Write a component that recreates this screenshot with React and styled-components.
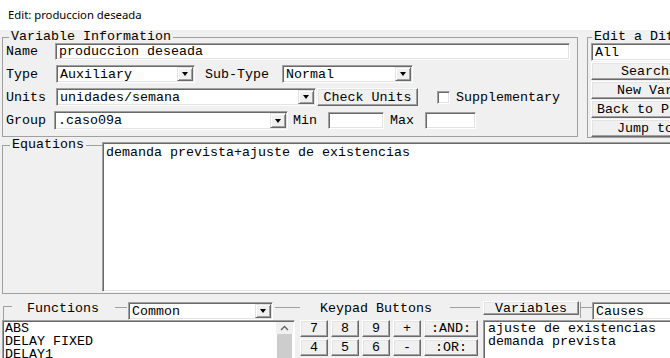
import React from "react";
import styled, { createGlobalStyle } from "styled-components";

const MONO = `"Liberation Mono", "DejaVu Sans Mono", monospace`;

const Global = createGlobalStyle`
  html, body { margin: 0; padding: 0; overflow: hidden; background: #f0f0f0; }
  body { width: 670px; height: 358px; }
`;

const Window = styled.div`
  width: 780px;
  height: 358px;
  overflow: hidden;
  background: #f0f0f0;
  font-family: ${MONO};
  font-size: 13.33px;
  line-height: 15px;
  color: #000;
`;

const TitleBar = styled.div`
  height: 30px;
  background: #fff;
  padding-left: 8px;
  font-family: "Noto Sans", "Segoe UI", sans-serif;
  font-size: 11.3px;
  line-height: 30px;
`;

const TopRow = styled.div`
  display: flex;
  align-items: flex-start;
  height: 108px;
  padding: 1px 0 0 2px;
  gap: 9px;
`;

const Group = styled.fieldset`
  margin: 0;
  padding: 0 0 ${(p) => p.$pb ?? 0}px ${(p) => p.$pl ?? 3}px;
  border: 1px solid #a0a0a0;
  min-width: 0;
  width: ${(p) => p.$w}px;
  box-sizing: border-box;
  flex: none;
`;

const Legend = styled.legend`
  margin-left: ${(p) => p.$ml ?? 3}px;
  padding: 0 2px;
  line-height: 12px;
  white-space: nowrap;
`;

const Stack = styled.div`
  display: flex;
  flex-direction: column;
  gap: ${(p) => p.$gap ?? 5}px;
`;

const Row = styled.div`
  display: flex;
  align-items: center;
  height: ${(p) => p.$h ?? 18}px;
`;

const Label = styled.span`
  flex: none;
  width: ${(p) => (p.$w ? `${p.$w}px` : "auto")};
  margin-left: ${(p) => p.$ml ?? 0}px;
  white-space: nowrap;
`;

const Field = styled.div`
  box-sizing: border-box;
  flex: none;
  width: ${(p) => p.$w}px;
  height: ${(p) => p.$h ?? 18}px;
  margin-left: ${(p) => p.$ml ?? 0}px;
  margin-top: ${(p) => p.$mt ?? 0}px;
  background: #fff;
  border: 1px solid;
  border-color: #a0a0a0 #fff #fff #a0a0a0;
  box-shadow: inset 1px 1px 0 #696969, inset -1px -1px 0 #e3e3e3;
  padding: 0 0 0 3px;
  display: flex;
  align-items: center;
  justify-content: space-between;
  white-space: nowrap;
  overflow: hidden;
`;

const DropBtn = styled.span`
  flex: none;
  width: 16px;
  height: calc(100% - 2px);
  margin-right: 1px;
  box-sizing: border-box;
  background: #f0f0f0;
  border: 1px solid;
  border-color: #e3e3e3 #696969 #696969 #e3e3e3;
  box-shadow: inset 1px 1px 0 #fff, inset -1px -1px 0 #a0a0a0;
  display: flex;
  align-items: center;
  justify-content: center;
  &::after {
    content: "";
    border-left: 3.5px solid transparent;
    border-right: 3.5px solid transparent;
    border-top: 4px solid #000;
  }
`;

const Button = styled.div`
  box-sizing: border-box;
  flex: none;
  width: ${(p) => p.$w}px;
  height: ${(p) => p.$h ?? 18}px;
  margin-left: ${(p) => p.$ml ?? 0}px;
  margin-top: ${(p) => p.$mt ?? 0}px;
  background: #f0f0f0;
  border: 1px solid;
  border-color: #fff #696969 #696969 #fff;
  box-shadow: inset -1px -1px 0 #a0a0a0, inset 1px 1px 0 #e3e3e3;
  display: flex;
  align-items: center;
  justify-content: center;
  white-space: nowrap;
  overflow: hidden;
`;

const Check = styled.span`
  flex: none;
  box-sizing: border-box;
  width: 13px;
  height: 13px;
  margin-left: ${(p) => p.$ml ?? 0}px;
  margin-right: 6px;
  background: #fff;
  border: 1px solid;
  border-color: #a0a0a0 #fff #fff #a0a0a0;
  box-shadow: inset 1px 1px 0 #696969, inset -1px -1px 0 #e3e3e3;
`;

const Select = ({ w, h, ml, mt, children }) => (
  <Field $w={w} $h={h} $ml={ml} $mt={mt}>
    <span>{children}</span>
    <DropBtn />
  </Field>
);

/* Equations */
const EqGroup = styled.fieldset`
  margin: 0 0 0 2px;
  padding: 0 0 1px 0;
  border: 1px solid #a0a0a0;
  min-width: 0;
  width: 760px;
  box-sizing: border-box;
`;

const EqText = styled.div`
  box-sizing: border-box;
  margin: -9px 0 0 99px;
  width: 640px;
  height: 150px;
  background: #fff;
  border: 1px solid;
  border-color: #a0a0a0 #fff #fff #a0a0a0;
  box-shadow: inset 1px 1px 0 #696969, inset -1px -1px 0 #e3e3e3;
  padding: 2px 0 0 3px;
  white-space: nowrap;
`;

/* Bottom */
const HeaderRow = styled.div`
  display: flex;
  align-items: flex-start;
  height: 20px;
  margin-top: 6px;
`;

const Rule = styled.span`
  flex: none;
  box-sizing: border-box;
  width: ${(p) => p.$w}px;
  height: ${(p) => p.$h ?? 1}px;
  margin-left: ${(p) => p.$ml ?? 0}px;
  margin-top: ${(p) => p.$mt ?? 7}px;
  border-top: 1px solid #a0a0a0;
  border-left: ${(p) => (p.$corner ? "1px solid #a0a0a0" : "none")};
`;

const Tee = styled.span`
  flex: none;
  width: 11px;
  height: 16px;
  margin: 2px 0 0 1px;
  border-left: 1px solid #a0a0a0;
  background: linear-gradient(#a0a0a0, #a0a0a0) 0 5px / 100% 1px no-repeat;
`;

const HeadLabel = styled.span`
  flex: none;
  margin-left: ${(p) => p.$ml}px;
  margin-top: 1px;
  white-space: nowrap;
`;

const ContentRow = styled.div`
  display: flex;
  align-items: flex-start;
`;

const ListBox = styled.div`
  box-sizing: border-box;
  flex: none;
  display: flex;
  width: ${(p) => p.$w}px;
  height: 60px;
  margin-left: ${(p) => p.$ml}px;
  background: #fff;
  border: 1px solid;
  border-color: #a0a0a0 #fff #fff #a0a0a0;
  box-shadow: inset 1px 1px 0 #696969;
  overflow: hidden;
`;

const ListItems = styled.div`
  flex: 1;
  padding: 1px 0 0 ${(p) => p.$pl ?? 2}px;
  line-height: 13px;
  white-space: nowrap;
`;

const ScrollBar = styled.div`
  flex: none;
  width: 17px;
  margin: 1px 1px 0 0;
  display: flex;
  flex-direction: column;
`;

const ScrollArrow = styled.div`
  height: 12px;
  background: #f0f0f0;
  display: flex;
  align-items: center;
  justify-content: center;
`;

const ScrollThumb = styled.div`
  flex: 1;
  margin: 0 1px;
  background: #cdcdcd;
`;

const Keypad = styled.div`
  flex: none;
  margin-left: 5px;
  display: grid;
  grid-template-columns: repeat(4, 28px) 54px;
  grid-auto-rows: 17px;
  column-gap: 3px;
  row-gap: 2px;
`;

const Key = styled(Button)`
  width: auto;
  height: auto;
`;

const keys = ["7", "8", "9", "+", ":AND:", "4", "5", "6", "-", ":OR:"];

export default function App() {
  return (
    <Window>
      <Global />
      <TitleBar>Edit: produccion deseada</TitleBar>

      <TopRow>
        <Group $w={576} $pb={6}>
          <Legend>Variable Information</Legend>
          <Stack>
            <Row $h={17}>
              <Label $w={49}>Name</Label>
              <Field $w={515} $h={17}>produccion deseada</Field>
            </Row>
            <Row>
              <Label $w={50}>Type</Label>
              <Select w={139}>Auxiliary</Select>
              <Label $ml={10}>Sub-Type</Label>
              <Select w={131} ml={13}>Normal</Select>
            </Row>
            <Row>
              <Label $w={50}>Units</Label>
              <Select w={260}>unidades/semana</Select>
              <Button $w={101} $ml={1}>Check Units</Button>
              <Check $ml={19} />
              <Label>Supplementary</Label>
            </Row>
            <Row $h={19}>
              <Label $w={48}>Group</Label>
              <Select w={234} h={19}>.caso09a</Select>
              <Label $ml={5}>Min</Label>
              <Field $w={56} $h={17} $ml={11} />
              <Label $ml={6}>Max</Label>
              <Field $w={51} $h={17} $ml={11} />
            </Row>
          </Stack>
        </Group>

        <Group $w={130} $pl={3}>
          <Legend $ml={1}>Edit a Different Variable</Legend>
          <Stack $gap={1}>
            <Field $w={120}>All</Field>
            <Button $w={108}>Search</Button>
            <Button $w={108}>New Var</Button>
            <Button $w={108}>Back to Prev</Button>
            <Button $w={108}>Jump to</Button>
          </Stack>
        </Group>
      </TopRow>

      <EqGroup>
        <Legend $ml={7}>Equations</Legend>
        <EqText>demanda prevista+ajuste de existencias</EqText>
      </EqGroup>

      <HeaderRow>
        <Rule $corner $w={9} $h={14} $ml={3} $mt={6} />
        <HeadLabel $ml={15}>Functions</HeadLabel>
        <Rule $w={12} $ml={16} />
        <Select w={145} ml={1} mt={2}>Common</Select>
        <Rule $w={25} $ml={2} />
        <HeadLabel $ml={20}>Keypad Buttons</HeadLabel>
        <Rule $w={30} $ml={18} />
        <Button $w={96} $h={14} $ml={3} $mt={1}>Variables</Button>
        <Tee />
        <Select w={120} mt={2}>Causes</Select>
      </HeaderRow>

      <ContentRow>
        <ListBox $w={293} $ml={2}>
          <ListItems>
            <div>ABS</div>
            <div>DELAY FIXED</div>
            <div>DELAY1</div>
          </ListItems>
          <ScrollBar>
            <ScrollArrow>
              <svg width="9" height="6" viewBox="0 0 9 6">
                <path d="M1 5 L4.5 1.5 L8 5" fill="none" stroke="#606060" strokeWidth="1.3" />
              </svg>
            </ScrollArrow>
            <ScrollThumb />
          </ScrollBar>
        </ListBox>
        <Keypad>
          {keys.map((k) => (
            <Key key={k}>{k}</Key>
          ))}
        </Keypad>
        <ListBox $w={220} $ml={5}>
          <ListItems $pl={4}>
            <div>ajuste de existencias</div>
            <div>demanda prevista</div>
          </ListItems>
        </ListBox>
      </ContentRow>
    </Window>
  );
}
